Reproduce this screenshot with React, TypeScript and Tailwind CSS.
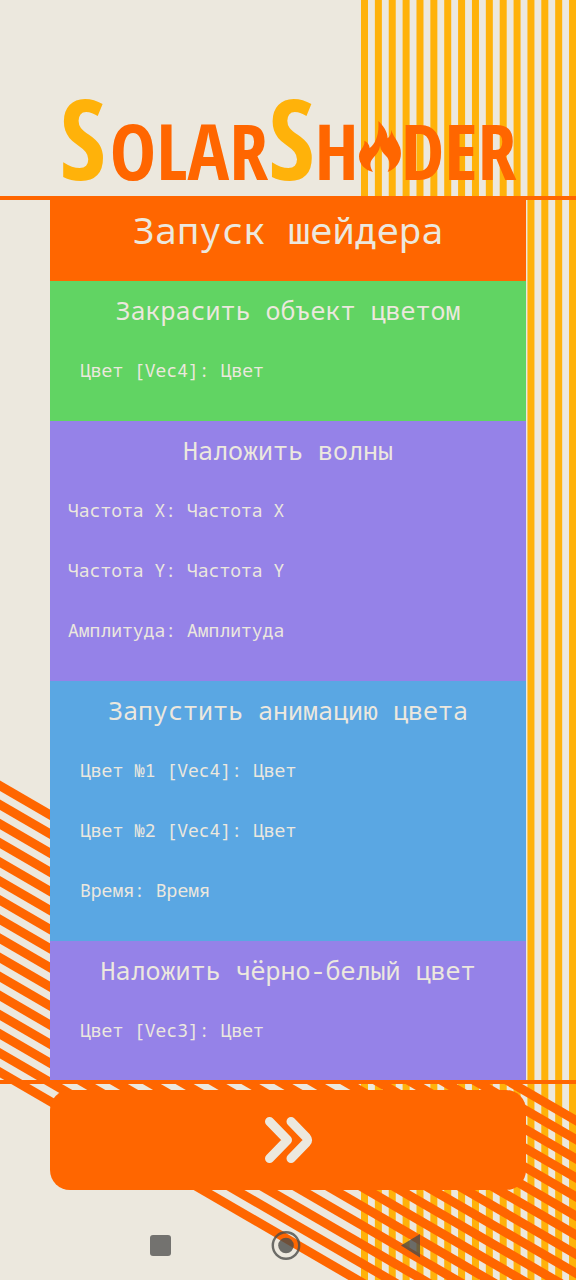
type Param = { label: string; value: string };
type Block = { title: string; tone: string; indent: string; params: Param[] };

const blocks: Block[] = [
  {
    title: "Закрасить объект цветом",
    tone: "bg-[#61d463]",
    indent: "pl-[30px]",
    params: [{ label: "Цвет [Vec4]:", value: "Цвет" }],
  },
  {
    title: "Наложить волны",
    tone: "bg-[#9582e8]",
    indent: "pl-[18px]",
    params: [
      { label: "Частота X:", value: "Частота X" },
      { label: "Частота Y:", value: "Частота Y" },
      { label: "Амплитуда:", value: "Амплитуда" },
    ],
  },
  {
    title: "Запустить анимацию цвета",
    tone: "bg-[#5aa7e3]",
    indent: "pl-[30px]",
    params: [
      { label: "Цвет №1 [Vec4]:", value: "Цвет" },
      { label: "Цвет №2 [Vec4]:", value: "Цвет" },
      { label: "Время:", value: "Время" },
    ],
  },
  {
    title: "Наложить чёрно-белый цвет",
    tone: "bg-[#9582e8]",
    indent: "pl-[30px]",
    params: [{ label: "Цвет [Vec3]:", value: "Цвет" }],
  },
];

function Backdrop() {
  const columns = Array.from({ length: 16 }, (_, i) => 361 + i * 13.87);
  const slants = Array.from({ length: 16 }, (_, i) => 780.5 + i * 19.1);
  return (
    <svg
      aria-hidden="true"
      viewBox="0 0 576 1280"
      preserveAspectRatio="xMidYMid slice"
      className="absolute inset-0 h-full w-full"
    >
      {columns.map((x) => (
        <rect key={x} x={x} y={0} width={7} height={1280} fill="#ffb20a" />
      ))}
      {slants.map((y) => (
        <polygon
          key={y}
          points={`0,${y} 576,${y + 334.7} 576,${y + 345.2} 0,${y + 10.5}`}
          fill="#ff6600"
        />
      ))}
    </svg>
  );
}

function Flame() {
  return (
    <svg aria-hidden="true" viewBox="18 18 126 153" className="h-[51px] w-[42px] shrink-0">
      <path
        fill="#ff6600"
        d="M76 18C91 32 103 49 104 70C111 64 115 56 115 44C119 62 134 76 141 97C150 127 137 158 104 171C113 152 111 135 99 123C90 114 83 106 81 92C79 108 70 118 61 128C49 141 50 155 60 171C36 166 18 148 18 124C18 102 37 97 34 77C44 81 49 89 50 99C67 86 79 60 76 18Z"
      />
    </svg>
  );
}

function Logo() {
  return (
    <h1 className="flex h-[196px] items-end justify-center px-6 pb-4 font-['Open_Sans_Condensed','Open_Sans',sans-serif] text-[78px] leading-[60px] font-bold text-[#ff6600] uppercase">
      <span className="flex items-baseline">
        <span className="pr-1 text-[112px] text-[#ffb20a]">S</span>
        <span>olar</span>
        <span className="text-[112px] text-[#ffb20a]">S</span>
        <span>h</span>
      </span>
      <span className="pb-2">
        <Flame />
      </span>
      <span className="flex items-baseline">der</span>
    </h1>
  );
}

function ShaderBlock({ title, tone, indent, params }: Block) {
  return (
    <section className={`${tone} pb-5 last:pb-[19px]`}>
      <h3 className="flex h-[60px] items-center justify-center text-[25px]">{title}</h3>
      <dl className={`${indent} text-[18px]`}>
        {params.map((p) => (
          <div key={p.label} className="flex h-[60px] items-center gap-[11px] pb-[2px]">
            <dt>{p.label}</dt>
            <dd>{p.value}</dd>
          </div>
        ))}
      </dl>
    </section>
  );
}

export default function App() {
  return (
    <div className="relative min-h-screen overflow-hidden bg-[#ece8de]">
      <Backdrop />
      <div className="relative flex flex-col">
        <header>
          <Logo />
        </header>
        <main className="border-y-4 border-[#ff6600]">
          <div className="mx-[50px] font-['Noto_Sans_Mono','DejaVu_Sans_Mono',monospace] text-[#ece8de]">
            <h2 className="flex h-[81px] items-center justify-center bg-[#ff6600] pb-[22px] text-[37px]">
              Запуск шейдера
            </h2>
            {blocks.map((b) => (
              <ShaderBlock key={b.title} {...b} />
            ))}
          </div>
        </main>
        <div className="px-[50px] pt-[6px]">
          <button
            type="button"
            aria-label="Далее"
            className="flex h-[100px] w-full items-center justify-center rounded-[20px] bg-[#ff6600]"
          >
            <svg
              aria-hidden="true"
              viewBox="0 0 48 48"
              fill="none"
              stroke="#ece8de"
              strokeWidth="9"
              strokeLinecap="round"
              strokeLinejoin="round"
              className="h-12 w-12 overflow-visible"
            >
              <path d="M5.5 5.5L23.5 24L5.5 42.5M27 5.5L42.5 21.5Q44.5 24 42.5 26.5L27 42.5" />
            </svg>
          </button>
        </div>
        <nav className="flex justify-center gap-[95px] pt-10 pr-1 pb-5">
          <button type="button" aria-label="Недавние" className="h-[30px] w-[30px]">
            <svg viewBox="0 0 30 30" className="h-full w-full">
              <rect x="4" y="5" width="21" height="21" rx="3" fill="#4b4b49" fillOpacity="0.75" />
            </svg>
          </button>
          <button type="button" aria-label="Домой" className="h-[30px] w-[30px]">
            <svg viewBox="0 0 30 30" className="h-full w-full">
              <circle cx="15" cy="15.5" r="13.2" fill="none" stroke="#4b4b49" strokeOpacity="0.8" strokeWidth="2.4" />
              <circle cx="15" cy="15.5" r="7.8" fill="#4b4b49" fillOpacity="0.8" />
            </svg>
          </button>
          <button type="button" aria-label="Назад" className="h-[30px] w-[30px]">
            <svg viewBox="0 0 30 30" className="h-full w-full">
              <path d="M5 15.5L24 4V27.5Z" fill="#4b4b49" fillOpacity="0.8" />
            </svg>
          </button>
        </nav>
      </div>
    </div>
  );
}
